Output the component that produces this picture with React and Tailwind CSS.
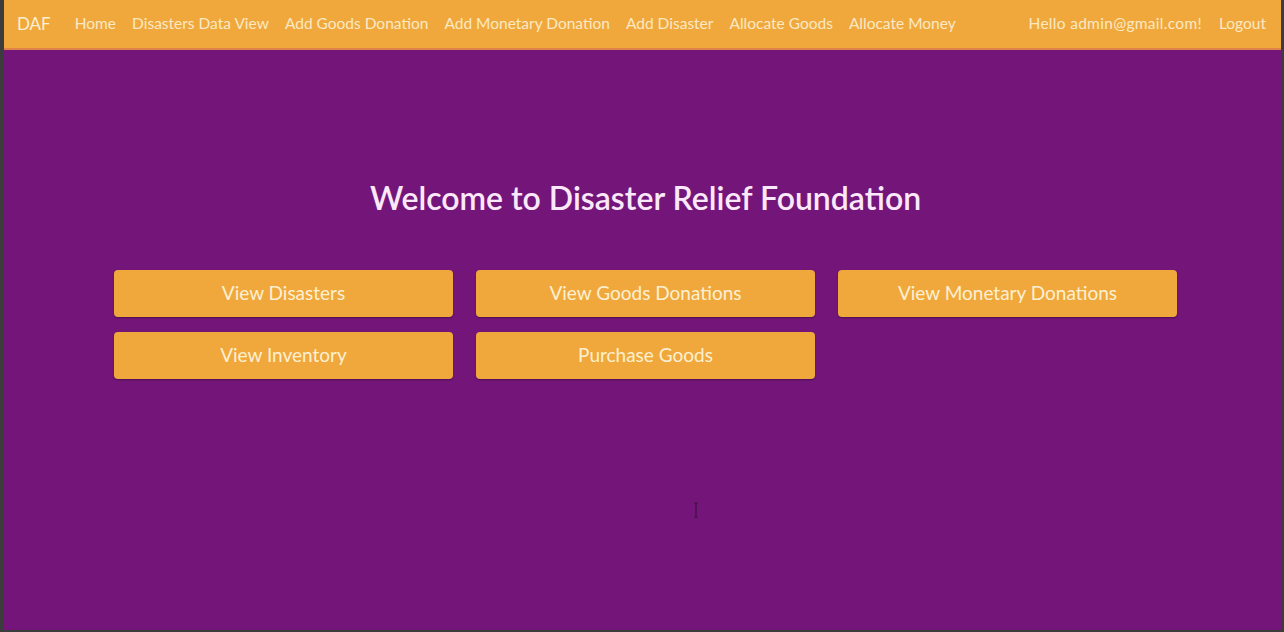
const NAV = [
  "Home",
  "Disasters Data View",
  "Add Goods Donation",
  "Add Monetary Donation",
  "Add Disaster",
  "Allocate Goods",
  "Allocate Money",
];

const ACTIONS = [
  "View Disasters",
  "View Goods Donations",
  "View Monetary Donations",
  "View Inventory",
  "Purchase Goods",
];

export default function App() {
  return (
    <div className="flex h-[632px] w-[1284px] bg-[#3c3c3c] font-['Lato','Open_Sans',sans-serif]">
      <div className="ml-[4px] mr-[3px] mb-[2px] flex flex-1 flex-col bg-[#741679]">
        <nav className="flex h-[50px] items-center border-b-2 border-[#e0834a] bg-[#f0a83c] pl-[13px] pr-[15px] text-[15.5px] text-[#fdf0d2]">
          <span className="mr-[24px] text-[17px] text-[#fdf0d2]">DAF</span>
          <div className="flex gap-[16px]">
            {NAV.map((l) => (
              <a key={l} href="#" className="whitespace-nowrap text-[#fbe8c4]">
                {l}
              </a>
            ))}
          </div>
          <div className="ml-auto flex gap-[17px] text-[#fbe8c4]">
            <span className="tracking-[0.3px]">Hello admin@gmail.com!</span>
            <a href="#">Logout</a>
          </div>
        </nav>

        <main className="relative flex flex-1 flex-col items-center pl-[6px] pt-[128px]">
          <h1 className="text-[32px] font-semibold leading-[40px] text-[#fbe9fb]">
            Welcome to Disaster Relief Foundation
          </h1>
          <div className="mt-[52px] grid w-[1063px] grid-cols-3 gap-x-[23px] gap-y-[15px]">
            {ACTIONS.map((a) => (
              <button
                key={a}
                className="h-[47px] rounded-[4px] bg-[#f0a83c] text-[19px] text-[#fdf0d2] shadow-[0_1px_2px_rgba(0,0,0,0.35)]"
              >
                {a}
              </button>
            ))}
          </div>
          <svg className="absolute left-[689px] top-[452px]" width="6" height="16" viewBox="0 0 6 16">
            <path d="M1 1h4M3 1v14M1 15h4" stroke="#3a1440" strokeWidth="1.2" fill="none" />
          </svg>
        </main>
      </div>
    </div>
  );
}
